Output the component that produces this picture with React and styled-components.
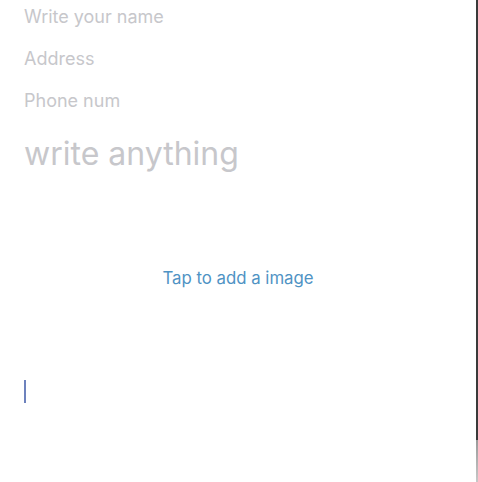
import React from "react";
import styled, { createGlobalStyle } from "styled-components";

const Global = createGlobalStyle`
  html, body { margin: 0; padding: 0; background: #fff; }
  body { font-family: Inter, "Noto Sans", sans-serif; -webkit-font-smoothing: antialiased; }
  #root { width: 478px; height: 482px; }
`;

const Screen = styled.div`
  display: flex;
  width: 478px;
  height: 482px;
  overflow: hidden;
`;

const Page = styled.div`
  flex: 1;
  display: flex;
  flex-direction: column;
  padding: 6px 0 0 24px;
  background: #fff;
`;

const Field = styled.div`
  font-size: 18px;
  line-height: 22px;
  color: #c7c7cb;
  height: 42px;
`;

const Big = styled.div`
  font-size: 32px;
  line-height: 40px;
  color: #c7c7cb;
  margin-top: 2px;
`;

const ImageArea = styled.div`
  display: flex;
  justify-content: center;
  padding-right: 24px;
  margin-top: 94px;
  font-size: 16.8px;
  line-height: 20px;
  color: #4f93c4;
`;

const Cursor = styled.div`
  width: 2px;
  height: 23px;
  background: #6d82bd;
  margin-top: 92px;
`;

const Edge = styled.div`
  width: 2px;
  display: flex;
  flex-direction: column;
`;

const EdgePart = styled.div`
  flex: ${(p) => p.$grow};
  background: ${(p) => p.$color};
`;

export default function App() {
  return (
    <>
      <Global />
      <Screen>
        <Page>
          <Field>Write your name</Field>
          <Field>Address</Field>
          <Field>Phone num</Field>
          <Big>write anything</Big>
          <ImageArea>Tap to add a image</ImageArea>
          <Cursor />
        </Page>
        <Edge>
          <EdgePart $grow={440} $color="#3a3a3a" />
          <EdgePart $grow={42} $color="linear-gradient(#9a9a9a, #c8c8c8)" />
        </Edge>
      </Screen>
    </>
  );
}
